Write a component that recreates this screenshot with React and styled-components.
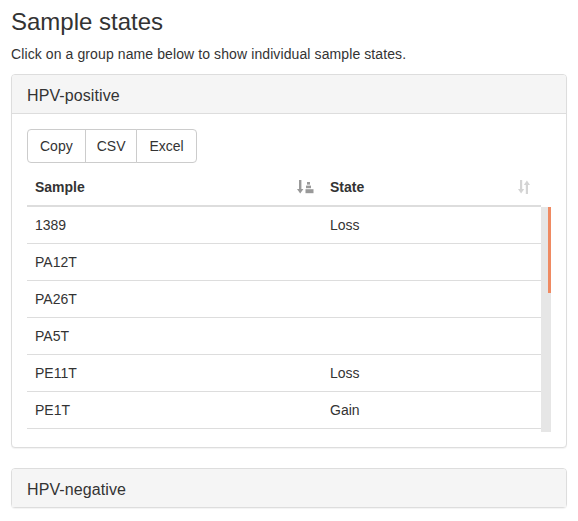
import React from 'react'
import styled, { createGlobalStyle } from 'styled-components'

const GlobalStyle = createGlobalStyle`
  * { box-sizing: border-box; }
  body {
    margin: 0;
    background: #fff;
    font-family: "Liberation Sans", Arial, sans-serif;
    font-size: 14px;
    line-height: 20px;
    color: #333;
  }
`

const Page = styled.div`
  padding: 0 11px;
`

const Title = styled.h3`
  font-size: 24px;
  font-weight: 500;
  line-height: 26.4px;
  margin: 9px 0 9px;
`

const Intro = styled.p`
  margin: 0 0 10px;
  letter-spacing: 0.1px;
`

const Panel = styled.div`
  border: 1px solid #ddd;
  border-radius: 4px;
  background: #fff;
  box-shadow: 0 1px 1px rgba(0, 0, 0, 0.05);
  margin-bottom: 20px;
`

const PanelHeading = styled.div`
  background: #f5f5f5;
  padding: 12px 15px 8px;
  border-radius: 3px 3px 0 0;
  border-bottom: ${p => (p.$open ? '1px solid #ddd' : 'none')};
  font-size: 16px;
  line-height: 17.6px;
  letter-spacing: 0.1px;
  cursor: pointer;
`

const PanelBody = styled.div`
  padding: 15px;
`

const ButtonGroup = styled.div`
  display: inline-flex;
  margin-bottom: 6px;
`

const Button = styled.button`
  font-family: inherit;
  font-size: 14px;
  line-height: 20px;
  color: #333;
  background: #fff;
  border: 1px solid #ccc;
  padding: 6px ${p => p.$pad || 12}px;
  margin-left: -1px;
  border-radius: 0;
  &:first-child {
    margin-left: 0;
    border-radius: 4px 0 0 4px;
  }
  &:last-child {
    border-radius: 0 4px 4px 0;
  }
`

const Grid = styled.div`
  display: grid;
  grid-template-columns: 295px 1fr;
`

const HeadRow = styled(Grid)`
  margin-right: 10px;
  border-bottom: 2px solid #ddd;
`

const HeadCell = styled.div`
  display: flex;
  justify-content: space-between;
  align-items: center;
  padding: 8px 8px;
  font-weight: bold;
`

const SortIcon = styled.svg`
  height: 14px;
  width: ${p => (p.$active ? '17px' : '12px')};
  fill: ${p => (p.$active ? '#999' : '#d4d4d4')};
  margin-right: ${p => (p.$active ? '0' : '3px')};
`

const ScrollArea = styled.div`
  display: flex;
  height: 225px;
`

const Rows = styled.div`
  flex: 1;
  overflow: hidden;
`

const Row = styled(Grid)`
  border-top: 1px solid #ddd;
  &:first-child {
    border-top: none;
  }
`

const Cell = styled.div`
  padding: 8px;
  min-height: 36px;
`

const Track = styled.div`
  width: 10px;
  background: #e6e6e6;
  display: flex;
  justify-content: flex-end;
  align-items: flex-start;
`

const Thumb = styled.div`
  width: 3px;
  height: 86px;
  background: #ef8a62;
`

const samples = [
  ['1389', 'Loss'],
  ['PA12T', ''],
  ['PA26T', ''],
  ['PA5T', ''],
  ['PE11T', 'Loss'],
  ['PE1T', 'Gain'],
  ['PE2T', ''],
]

const SortedIcon = () => (
  <SortIcon viewBox="0 0 17 14" $active>
    <rect x="2" y="0" width="2.4" height="10" />
    <polygon points="0,9 6.4,9 3.2,13.5" />
    <rect x="10" y="2" width="3" height="2.6" />
    <rect x="9" y="5.6" width="5" height="2.6" />
    <rect x="8.5" y="9.2" width="8" height="4" />
  </SortIcon>
)

const UnsortedIcon = () => (
  <SortIcon viewBox="0 0 12 14">
    <rect x="2" y="0" width="2.2" height="10" />
    <polygon points="0,9 6.2,9 3.1,13.5" />
    <rect x="7.8" y="4" width="2.2" height="10" />
    <polygon points="5.8,5 12,5 8.9,0.5" />
  </SortIcon>
)

const App = () => (
  <>
    <GlobalStyle />
    <Page>
      <Title>Sample states</Title>
      <Intro>Click on a group name below to show individual sample states.</Intro>
      <Panel>
        <PanelHeading $open>HPV-positive</PanelHeading>
        <PanelBody>
          <ButtonGroup>
            <Button>Copy</Button>
            <Button $pad={11}>CSV</Button>
            <Button>Excel</Button>
          </ButtonGroup>
          <HeadRow>
            <HeadCell>Sample <SortedIcon /></HeadCell>
            <HeadCell>State <UnsortedIcon /></HeadCell>
          </HeadRow>
          <ScrollArea>
            <Rows>
              {samples.map(([name, state]) => (
                <Row key={name}>
                  <Cell>{name}</Cell>
                  <Cell>{state}</Cell>
                </Row>
              ))}
            </Rows>
            <Track>
              <Thumb />
            </Track>
          </ScrollArea>
        </PanelBody>
      </Panel>
      <Panel>
        <PanelHeading>HPV-negative</PanelHeading>
      </Panel>
    </Page>
  </>
)

export default App
